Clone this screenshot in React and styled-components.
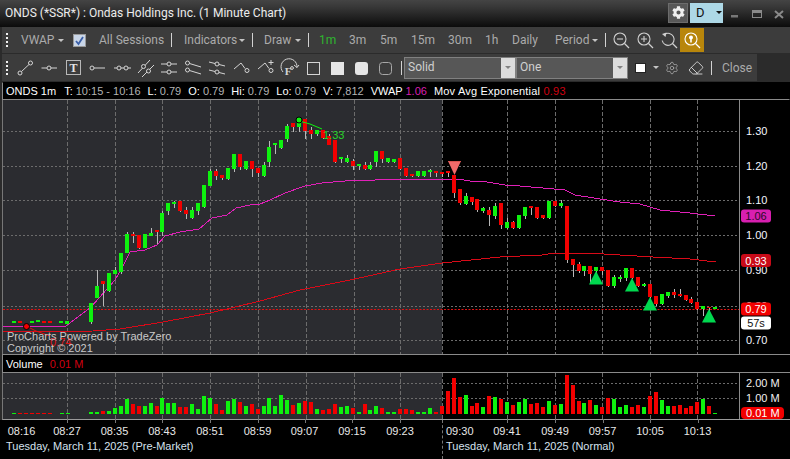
import React from 'react';
import styled, { createGlobalStyle } from 'styled-components';
import { FaCog } from 'react-icons/fa';
import { Settings, Eraser } from 'lucide-react';

const GlobalStyle = createGlobalStyle`
    html, body {
        margin: 0;
        background: #2b2b2b;
    }
    * {
        box-sizing: border-box;
    }
`;

const Window = styled.div`
    width: 790px;
    height: 459px;
    overflow: hidden;
    display: flex;
    flex-direction: column;
    background: #2b2b2b;
    font-family: "Liberation Sans", Arial, sans-serif;
`;

const TitleBar = styled.div`
    height: 27px;
    flex: none;
    display: flex;
    align-items: center;
    padding: 0 0 2px 5px;
    background: linear-gradient(#444444, #383838 25%, #0b0b0b);
`;

const Title = styled.div`
    flex: 1;
    color: #ececec;
    font: 12px Roboto, sans-serif;
`;

const GearButton = styled.div`
    width: 20px;
    height: 20px;
    display: flex;
    align-items: center;
    justify-content: center;
    background: #585858;
    border: 1px solid #6c6c6c;
    color: #f0f0f0;
`;

const AccountButton = styled.div`
    width: 33px;
    height: 20px;
    margin-left: 2px;
    display: flex;
    align-items: center;
    padding-left: 6px;
    background: #add8e6;
    color: #111111;
    font: 13px Roboto, sans-serif;
`;

const WindowControls = styled.svg`
    width: 67px;
    height: 20px;
    flex: none;
`;

const Caret = styled.span`
    flex: none;
    width: 0;
    height: 0;
    margin-left: ${props => props.$ml || 0}px;
    border-left: 3.5px solid transparent;
    border-right: 3.5px solid transparent;
    border-top: 3.5px solid ${props => props.$color || '#c4c4c4'};
`;

const Toolbars = styled.div`
    flex: none;
    padding-left: 2px;
`;

const ToolRow = styled.div`
    display: flex;
    align-items: center;
    width: ${props => props.$width};
    height: ${props => props.$height}px;
    margin-bottom: 1px;
    background: #3c3c3c;
`;

const Grip = styled.div`
    flex: none;
    width: 2px;
    height: 14px;
    margin: 0 0 0 4px;
    background: repeating-linear-gradient(#f0f0f0 0 2px, transparent 2px 4px);
`;

const ToolText = styled.span`
    flex: none;
    width: ${props => props.$w}px;
    margin-left: ${props => props.$ml || 0}px;
    color: ${props => props.$color || '#ababab'};
    font: 12px Roboto, sans-serif;
    white-space: nowrap;
`;

const Sep = styled.span`
    flex: none;
    width: 1px;
    height: 14px;
    margin-left: ${props => props.$ml || 0}px;
    background: #d2d2d2;
`;

const CheckBox = styled.span`
    flex: none;
    width: 13px;
    height: 13px;
    margin-left: ${props => props.$ml}px;
    display: flex;
    align-items: center;
    justify-content: center;
    background: #c9d6e8;
    border: 1px solid #9a9a9a;
`;

const ZoomIcons = styled.div`
    flex: none;
    display: flex;
    align-items: center;
    margin-left: 7px;
    gap: 7px;
`;

const GoldButton = styled.div`
    width: 24px;
    height: 24px;
    margin-left: -5px;
    display: flex;
    align-items: center;
    justify-content: center;
    background: #b8860b;
`;

const ToolIcons = styled.svg`
    flex: none;
    display: block;
    margin-left: 5px;
    width: 388px;
    height: 27px;
`;

const SelectBox = styled.div`
    flex: none;
    width: ${props => props.$w}px;
    height: 22px;
    margin-left: ${props => props.$ml || 0}px;
    display: flex;
    align-items: stretch;
    background: #575757;
    border: 1px solid #808080;
    color: #d0d0d0;
    font: 12px Roboto, sans-serif;
`;

const SelectLabel = styled.span`
    flex: 1;
    padding-left: 3px;
    line-height: 19px;
`;

const SelectArrow = styled.span`
    flex: none;
    width: 14px;
    display: flex;
    align-items: center;
    justify-content: center;
    background: #dcdcdc;
`;

const Swatch = styled.span`
    flex: none;
    width: 11px;
    height: 10px;
    margin-left: 7px;
    background: #ffffff;
    border: 1px solid #222222;
`;

const IconSlot = styled.span`
    flex: none;
    display: flex;
    margin-left: ${props => props.$ml}px;
    color: ${props => props.$color || '#b8b8b8'};
`;

const InfoLine = styled.div`
    flex: none;
    height: 18px;
    margin-left: 2px;
    display: flex;
    align-items: center;
    padding-left: 3px;
    gap: 7px;
    background: #000000;
    border: 1px solid #000000;
    border-left-color: #8a8a8a;
    border-bottom-color: #8a8a8a;
    color: #ffffff;
    font-size: 11px;
    white-space: nowrap;
`;

const InfoValue = styled.span`
    color: ${props => props.$color || '#b4b4b4'};
`;

const InfoWide = styled.span`
    letter-spacing: 0.2px;
`;

const ChartPane = styled.div`
    flex: none;
    height: 254px;
    margin-left: 2px;
    border-left: 1px solid #777777;
`;

const VolumeHead = styled.div`
    flex: none;
    height: 19px;
    margin-left: 2px;
    display: flex;
    align-items: center;
    gap: 7px;
    padding-left: 3px;
    background: #000000;
    border: 1px solid #8a8a8a;
    border-right: none;
    color: #ffffff;
    font-size: 11px;
`;

const VolumePane = styled.div`
    flex: none;
    height: 47px;
    margin-left: 2px;
    border-left: 1px solid #777777;
    border-bottom: 1px solid #9a9a9a;
`;

const TimeAxis = styled.div`
    flex: 1;
    display: flex;
    background: #000000;
    color: #e8e8e8;
    font-size: 11px;
`;

const Session = styled.div`
    flex: none;
    width: ${props => props.$w}px;
    border-left: ${props => (props.$divided ? '1px dashed #777777' : 'none')};
`;

const TimeRow = styled.div`
    display: flex;
    height: 19px;
    padding-top: 3px;
    align-items: center;
`;

const Tick = styled.span`
    position: relative;
    flex: none;
    width: ${props => props.$w}px;
    text-align: ${props => (props.$left ? 'left' : 'center')};
    padding-left: ${props => (props.$left ? 3 : 0)}px;

    &::before {
        content: ${props => (props.$mark ? '""' : 'none')};
        position: absolute;
        left: 50%;
        top: -6px;
        height: 4px;
        border-left: 1px solid #777777;
    }
`;

const DateLine = styled.div`
    padding-left: ${props => props.$pl}px;
    color: #d6e2ee;
    line-height: 14px;
`;

// x, body top, body bottom, wick top, wick bottom, colour (page coordinates)
const candles = [
    [14, 321, 323], [20, 321, 323, 0, 0, 'r'], [32, 321, 323], [38, 320, 322], [44, 321, 323, 0, 0, 'r'], [50, 321, 323, 0, 0, 'r'],
    [61, 321, 323], [67, 321, 324],
    [91, 303, 322, 303, 324], [97, 286, 298, 270, 298], [103, 281, 284, 281, 306, 'r'], [109, 273, 291, 273, 292], [115, 270, 274, 267, 274],
    [121, 253, 272, 253, 274], [127, 234, 253, 232, 253], [133, 234, 236, 232, 243, 'r'], [139, 235, 248, 235, 249, 'r'], [145, 234, 248],
    [151, 233, 236, 228, 236], [157, 230, 232, 230, 244, 'r'], [162, 213, 232, 211, 236], [168, 203, 211, 203, 215], [174, 202, 204, 201, 208],
    [180, 201, 211, 201, 212, 'r'], [186, 210, 214, 207, 219, 'r'], [192, 210, 218, 207, 219], [198, 203, 211, 203, 215], [204, 185, 207, 185, 208],
    [210, 171, 186, 169, 186], [216, 171, 176, 169, 180, 'r'], [222, 175, 178, 175, 180, 'r'], [228, 168, 179, 168, 180], [234, 154, 169, 154, 172],
    [240, 154, 167, 154, 170, 'r'], [246, 161, 169, 161, 170], [252, 161, 169, 161, 177, 'r'], [258, 168, 173, 168, 177, 'r'], [264, 165, 176, 162, 177],
    [269, 147, 162, 141, 167], [275, 143, 145, 143, 154], [281, 140, 148, 140, 149], [287, 126, 139, 124, 142], [293, 123, 127, 123, 132, 'r'],
    [299, 123, 127, 118, 132], [305, 119, 131, 119, 139, 'r'], [311, 130, 134, 127, 139, 'r'], [317, 130, 134, 130, 136], [323, 130, 138, 130, 139, 'r'],
    [329, 136, 145, 134, 145, 'r'], [335, 140, 162, 140, 163, 'r'], [341, 157, 159, 157, 163], [347, 158, 162, 155, 163], [353, 161, 166, 159, 170, 'r'],
    [359, 164, 166, 164, 170], [365, 165, 169, 162, 170, 'r'], [370, 165, 169, 162, 170], [376, 151, 162, 151, 167], [382, 151, 159, 151, 163, 'r'],
    [388, 158, 162, 158, 163], [394, 159, 162, 159, 163], [400, 158, 169, 158, 170, 'r'], [406, 168, 176, 168, 177, 'r'], [412, 174, 176, 174, 177, 'r'],
    [418, 171, 176, 171, 177], [424, 171, 176, 171, 177], [430, 170, 172, 169, 177], [436, 171, 173, 171, 177, 'r'], [442, 172, 174, 172, 177, 'r'],
    [448, 171, 173, 171, 177, 'r'], [454, 175, 193, 175, 198, 'r'], [460, 189, 203, 189, 205, 'r'], [466, 196, 204, 193, 205], [472, 197, 202, 197, 205, 'r'],
    [477, 199, 210, 199, 212, 'r'], [483, 208, 211, 207, 213], [489, 210, 215, 207, 226, 'r'], [495, 206, 216, 203, 219], [501, 203, 225, 203, 229, 'r'],
    [507, 222, 228, 218, 229], [513, 222, 228, 221, 229, 'r'], [519, 215, 228, 215, 229], [525, 207, 216, 207, 219], [531, 206, 208, 206, 215, 'r'],
    [537, 207, 218, 207, 219, 'r'], [543, 215, 218, 215, 219, 'r'], [549, 201, 218, 201, 219], [555, 201, 206, 201, 207, 'r'], [561, 203, 206, 200, 208],
    [567, 206, 260, 206, 263, 'r'], [573, 259, 265, 259, 277, 'r'], [579, 264, 271, 262, 273, 'r'], [584, 266, 271, 266, 276], [590, 266, 274, 266, 283, 'r'],
    [596, 267, 271, 267, 275], [602, 267, 271, 267, 275, 'r'], [608, 270, 286, 270, 287, 'r'], [614, 277, 286, 275, 288], [620, 277, 279, 275, 282],
    [626, 268, 278, 268, 281], [632, 268, 278, 268, 279, 'r'], [638, 277, 286, 277, 287, 'r'], [644, 284, 286, 283, 287], [650, 284, 297, 284, 298, 'r'],
    [656, 296, 304, 296, 306, 'r'], [662, 294, 304, 294, 305], [668, 292, 296, 292, 298], [674, 292, 295, 289, 298, 'r'], [680, 294, 296, 289, 297, 'r'],
    [686, 295, 300, 295, 301, 'r'], [691, 299, 303, 297, 304, 'r'], [697, 302, 309, 302, 310, 'r'], [703, 306, 309, 306, 316], [709, 307, 308, 307, 311, 'r'],
    [715, 307, 309],
];

// x, height, colour
const volumes = [
    [91, 2], [97, 2], [103, 3, 'r'], [109, 3], [115, 6], [121, 8], [127, 15], [133, 10, 'r'], [139, 8, 'r'], [145, 8], [151, 11], [157, 8, 'r'],
    [162, 16], [168, 11], [174, 11], [180, 7, 'r'], [186, 7, 'r'], [192, 10], [198, 5], [204, 18], [210, 16], [216, 10, 'r'], [222, 4, 'r'], [228, 13],
    [234, 15], [240, 12, 'r'], [246, 8], [252, 10, 'r'], [258, 5, 'r'], [264, 8], [269, 16], [275, 8], [281, 19], [287, 14], [293, 9, 'r'], [299, 11],
    [305, 13, 'r'], [311, 12, 'r'], [317, 5], [323, 4, 'r'], [329, 5, 'r'], [335, 10, 'r'], [341, 7], [347, 8], [353, 6, 'r'], [359, 2], [365, 10, 'r'],
    [370, 4], [376, 8], [382, 6, 'r'], [388, 2], [394, 2], [400, 5, 'r'], [406, 5, 'r'], [412, 4, 'r'], [418, 2], [424, 2], [430, 6], [436, 2, 'r'],
    [442, 8, 'r'], [448, 23, 'r'], [454, 36, 'r'], [460, 17, 'r'], [466, 19], [472, 8, 'r'], [477, 11, 'r'], [483, 7], [489, 18, 'r'], [495, 17], [501, 15, 'r'],
    [507, 12], [513, 9, 'r'], [519, 12], [525, 15], [531, 10, 'r'], [537, 11, 'r'], [543, 7, 'r'], [549, 13], [555, 9, 'r'], [561, 10], [567, 39, 'r'],
    [573, 29, 'r'], [579, 13, 'r'], [584, 11], [590, 14, 'r'], [596, 9], [602, 7, 'r'], [608, 16, 'r'], [614, 15], [620, 7], [626, 9], [632, 7, 'r'],
    [638, 9, 'r'], [644, 7], [650, 18, 'r'], [656, 22, 'r'], [662, 14], [668, 8], [674, 8, 'r'], [680, 9, 'r'], [686, 6, 'r'], [691, 8, 'r'], [697, 12, 'r'],
    [703, 15], [709, 8, 'r'], [715, 1],
];

const volumeDashes = [[14, 'g'], [20, 'r'], [26, 'r'], [32, 'r'], [38, 'r'], [44, 'r'], [50, 'r'], [62, 'g'], [68, 'g']];

const vwapLine = '3,326 66,326 91,307 115,280 121,270 130,252 145,250 157,245 165,236 180,232 199,229 212,218 227,215 236,208 250,205 260,204 270,200 285,193 305,186 322,183 345,181 375,180 403,179 457,179 470,181 487,182 505,185 520,186 565,190 575,195 600,199 620,202 640,204 660,210 690,213 715,216';
const emaLine = '3,332 93,331 120,329 163,322 210,313 260,301 300,290 350,280 400,269 442,263 500,257 520,256 542,255 555,253 587,253 620,255 653,257 690,259 716,262';

const gridY = [131, 166, 200, 235, 270, 306, 340];
const gridX = [67, 115, 162, 210, 258, 306, 354, 400, 442, 507, 555, 602, 650, 697];
const priceLabels = [['1.30', 131], ['1.20', 166], ['1.10', 200], ['1.00', 235], ['0.90', 270], ['0.80', 306], ['0.70', 340]];
const buyMarks = [[596, 271], [632, 278], [650, 297], [709, 309]];

const GREEN = '#0ef20e';
const RED = '#f20000';

const AxisBadge = ({ y, fill, color, children }) => (
    <g>
        <rect x="741" y={y - 6.5} width="30" height="13" rx="3" fill={fill} />
        <text x="756" y={y + 4} textAnchor="middle" fontSize="11" fill={color}>{children}</text>
    </g>
);

function PriceChart() {
    return (
        <svg width="787" height="254" viewBox="3 100 787 254" style={{ display: 'block' }} fontFamily="'Liberation Sans', Arial, sans-serif">
            <rect x="3" y="100" width="787" height="254" fill="#000000" />
            <rect x="3" y="100" width="439" height="254" fill="#2b2c30" />
            <g stroke="#6c6c6c" strokeWidth="1" strokeDasharray="2 2" shapeRendering="crispEdges">
                {gridY.map(y => <line key={y} x1="3" x2="739" y1={y} y2={y} />)}
            </g>
            <g stroke="#6c6c6c" strokeWidth="1" strokeDasharray="4 2" shapeRendering="crispEdges">
                {gridX.map(x => <line key={x} x1={x} x2={x} y1="100" y2="354" />)}
            </g>
            <line x1="3" x2="739" y1="309.5" y2="309.5" stroke="#e01010" strokeDasharray="2 1.5" />
            <line x1="739.5" x2="739.5" y1="100" y2="354" stroke="#8a8a8a" />

            <polyline points={vwapLine} fill="none" stroke="#e020b8" strokeWidth="1" shapeRendering="crispEdges" />
            <polyline points={emaLine} fill="none" stroke="#d80a18" strokeWidth="1" shapeRendering="crispEdges" />

            <g shapeRendering="crispEdges">
                {candles.map(([x, top, bottom, wickTop, wickBottom, c]) => (
                    <g key={x}>
                        {wickTop ? <line x1={x + 0.5} x2={x + 0.5} y1={wickTop} y2={wickBottom} stroke="#b8b8b8" /> : null}
                        <rect x={x - 2} y={top} width="4" height={bottom - top} fill={c === 'r' ? RED : GREEN} />
                    </g>
                ))}
            </g>

            <polyline points="299,121 310,124 322,129" fill="none" stroke={GREEN} />
            <circle cx="299" cy="120" r="3" fill={GREEN} stroke="#000000" />
            <text x="323" y="139" fontSize="11" fill="#28d428">1.33</text>

            <polyline points="26,326 36,331 50,336" fill="none" stroke="#e01010" />
            <circle cx="26.5" cy="326.5" r="3" fill="#f00000" stroke="#000000" />
            <text x="50" y="346" fontSize="11" fill="#e01010">0.74</text>

            <polygon points="448,161 461,161 454.5,175" fill="#f26a6a" />
            <line x1="448" x2="461" y1="161.5" y2="161.5" stroke="#d9534f" />
            {buyMarks.map(([x, y]) => (
                <polygon key={x} points={`${x},${y} ${x + 7},${y + 13.5} ${x - 7},${y + 13.5}`} fill="#00d84f" />
            ))}

            <text x="7" y="340" fontSize="11" fill="#c9c9c9">ProCharts Powered by TradeZero</text>
            <text x="7" y="352" fontSize="11" fill="#c9c9c9">Copyright © 2021</text>

            {priceLabels.map(([label, y]) => (
                <text key={label} x="746" y={y + 4} fontSize="11" fill="#f2f6ff">{label}</text>
            ))}
            <AxisBadge y={216} fill="#d81fb0" color="#2a0a2a">1.06</AxisBadge>
            <AxisBadge y={260.5} fill="#c80a18" color="#ffffff">0.93</AxisBadge>
            <AxisBadge y={309} fill="#f20000" color="#ffffff">0.79</AxisBadge>
            <AxisBadge y={323} fill="#ffffff" color="#111111">57s</AxisBadge>
        </svg>
    );
}

function VolumeChart() {
    return (
        <svg width="787" height="46" viewBox="3 373 787 46" style={{ display: 'block' }} fontFamily="'Liberation Sans', Arial, sans-serif">
            <rect x="3" y="373" width="787" height="46" fill="#000000" />
            <rect x="3" y="373" width="439" height="46" fill="#2b2c30" />
            <g stroke="#6c6c6c" strokeDasharray="2 2" shapeRendering="crispEdges">
                <line x1="3" x2="739" y1="383" y2="383" />
                <line x1="3" x2="739" y1="398" y2="398" />
            </g>
            <g stroke="#6c6c6c" strokeDasharray="4 2" shapeRendering="crispEdges">
                {gridX.map(x => <line key={x} x1={x} x2={x} y1="373" y2="419" />)}
            </g>
            <line x1="739.5" x2="739.5" y1="373" y2="419" stroke="#8a8a8a" />
            <g shapeRendering="crispEdges">
                {volumeDashes.map(([x, c]) => <rect key={x} x={x - 2} y="413" width="4" height="1" fill={c === 'r' ? RED : GREEN} />)}
                {volumes.map(([x, h, c]) => <rect key={x} x={x - 2} y={414 - h} width="4" height={h} fill={c === 'r' ? RED : GREEN} />)}
            </g>
            <text x="746" y="387" fontSize="11" fill="#f0f0f0">2.00 M</text>
            <text x="746" y="402" fontSize="11" fill="#f0f0f0">1.00 M</text>
            <rect x="741" y="407" width="43" height="12" rx="4" fill="#f20000" />
            <text x="746" y="417" fontSize="11" fill="#ffffff">0.01 M</text>
        </svg>
    );
}

const Lens = ({ children, color = '#d0d0d0', size = 17 }) => (
    <svg width={size} height={size} viewBox="0 0 17 17" fill="none" stroke={color} strokeWidth="1.1">
        {children}
        <line x1="11.5" y1="11.5" x2="16" y2="16" strokeWidth="1.3" />
    </svg>
);

function DrawingTools() {
    return (
        <ToolIcons viewBox="12 54 388 27" fill="none" stroke="#d4d4d4" strokeWidth="1">
            <circle cx="19" cy="73" r="2" />
            <circle cx="29.5" cy="63" r="2" />
            <line x1="20.5" y1="71.5" x2="28" y2="64.5" />

            <path d="M40.5 68H46M50 68H56" />
            <circle cx="48" cy="68" r="2" />

            <rect x="65.5" y="60.5" width="14" height="14" stroke="#b8b8b8" />
            <text x="72.5" y="72" textAnchor="middle" fontSize="12" fontWeight="700" fontFamily="'Liberation Serif', serif" fill="#e2e2e2" stroke="none">T</text>

            <circle cx="91" cy="68" r="2" />
            <path d="M93 68H104" />

            <path d="M113 68H116M120 68H123M127 68H130" />
            <circle cx="118" cy="68" r="2" />
            <circle cx="125" cy="68" r="2" />

            <path d="M137 73L149 60M141 77L153 65" />
            <circle cx="142.5" cy="66.5" r="2" fill="#3c3c3c" />
            <circle cx="147.5" cy="71" r="2" fill="#3c3c3c" />

            <path d="M160 64H166M170 64H176M160 72H166M170 72H176" />
            <circle cx="168" cy="64" r="2" />
            <circle cx="168" cy="72" r="2" />

            <circle cx="186.5" cy="63" r="2" />
            <circle cx="186.5" cy="70" r="2" />
            <path d="M188.5 63.5L200 67M188.5 70.5L200 74" />

            <path d="M208 62L214 63.5M218 64.5L224 66M208 70L214 71.5M218 72.5L224 74" />
            <circle cx="216" cy="64" r="2" />
            <circle cx="216" cy="72" r="2" />

            <path d="M233 69L240 63L244 68.5" />
            <circle cx="246" cy="70.5" r="2" />

            <path d="M257 69L264 63L268 68.5" />
            <circle cx="270" cy="70.5" r="2" />
            <path d="M270 60V65M267.5 62.5H272.5" />

            <path d="M282 72A8 8 0 1 1 296 67.5L293 65M296 67.5L298 65" />
            <circle cx="291" cy="68" r="1.4" />
            <text x="287" y="75" textAnchor="middle" fontSize="11" fontWeight="700" fontFamily="'Liberation Serif', serif" fill="#d4d4d4" stroke="none">F</text>

            <rect x="306.5" y="62.5" width="12" height="12" />
            <rect x="330" y="62" width="13" height="13" fill="#e6e6e6" stroke="none" />
            <rect x="354" y="62" width="13" height="13" rx="3" fill="#e6e6e6" stroke="none" />
            <rect x="378.5" y="62.5" width="12" height="12" rx="3" stroke="#a8a8a8" />
        </ToolIcons>
    );
}

const TICKS_PRE = [['08:16', 43], ['08:27', 48, true], ['08:35', 47, true], ['08:43', 48, true], ['08:51', 48, true], ['08:59', 47, true], ['09:07', 47, true], ['09:15', 48, true], ['09:23', 48, true]];
const TICKS_REG = [['09:41', 48], ['09:49', 48], ['09:57', 47], ['10:05', 48], ['10:13', 47]];

function App() {
    return (
        <Window>
            <GlobalStyle />
            <TitleBar>
                <Title>ONDS (*SSR*) : Ondas Holdings Inc. (1 Minute Chart)</Title>
                <GearButton><FaCog size={13} /></GearButton>
                <AccountButton>D<Caret $ml={11} $color="#111111" /></AccountButton>
                <WindowControls viewBox="0 0 67 20">
                    <rect x="8" y="12" width="7" height="2.5" fill="#777777" />
                    <rect x="29.5" y="7.5" width="9" height="7" fill="none" stroke="#8a8a8a" />
                    <rect x="29" y="7" width="10" height="3" fill="#8a8a8a" />
                    <path d="M52 8L60 15M60 8L52 15" stroke="#8a8a8a" strokeWidth="2" />
                </WindowControls>
            </TitleBar>
            <Toolbars>
                <ToolRow $width="788px" $height={26}>
                    <Grip />
                    <ToolText $ml={13} $w={34}>VWAP</ToolText>
                    <Caret $ml={3} />
                    <CheckBox $ml={9}>
                        <svg width="11" height="11" viewBox="0 0 11 11" fill="none" stroke="#3a5fa8" strokeWidth="1.8"><path d="M2 6L4.5 9L9 2" /></svg>
                    </CheckBox>
                    <ToolText $ml={13} $w={72}>All Sessions</ToolText>
                    <Sep />
                    <ToolText $ml={12} $w={54}>Indicators</ToolText>
                    <Caret $ml={1} />
                    <Sep $ml={7} />
                    <ToolText $ml={11} $w={30}>Draw</ToolText>
                    <Caret $ml={1} />
                    <Sep $ml={7} />
                    <ToolText $ml={10} $w={30} $color="#2fb52f">1m</ToolText>
                    <ToolText $w={31}>3m</ToolText>
                    <ToolText $w={31}>5m</ToolText>
                    <ToolText $w={37}>15m</ToolText>
                    <ToolText $w={37}>30m</ToolText>
                    <ToolText $w={27}>1h</ToolText>
                    <ToolText $w={43}>Daily</ToolText>
                    <ToolText $w={36}>Period</ToolText>
                    <Caret $ml={1} />
                    <Sep $ml={7} />
                    <ZoomIcons>
                        <Lens><circle cx="7" cy="7" r="6" /><line x1="4" y1="7" x2="10" y2="7" /></Lens>
                        <Lens><circle cx="7" cy="7" r="6" /><path d="M4 7H10M7 4V10" /></Lens>
                        <Lens>
                            <path d="M3.5 2.5A6 6 0 1 1 1.2 8.5" />
                            <path d="M5.5 0.5L1 2L4.5 5Z" fill="#d0d0d0" stroke="none" />
                        </Lens>
                        <GoldButton>
                            <Lens color="#ffffff" size={17}>
                                <circle cx="7" cy="7" r="6" />
                                <circle cx="7" cy="5.5" r="2" fill="#ffffff" stroke="none" />
                                <rect x="6.2" y="6" width="1.6" height="4.5" fill="#ffffff" stroke="none" />
                            </Lens>
                        </GoldButton>
                    </ZoomIcons>
                </ToolRow>
                <ToolRow $width="755px" $height={27}>
                    <Grip />
                    <DrawingTools />
                    <Sep />
                    <SelectBox $ml={2} $w={112}>
                        <SelectLabel>Solid</SelectLabel>
                        <SelectArrow><Caret $color="#808080" /></SelectArrow>
                    </SelectBox>
                    <SelectBox $w={112}>
                        <SelectLabel>One</SelectLabel>
                        <SelectArrow><Caret $color="#808080" /></SelectArrow>
                    </SelectBox>
                    <Swatch />
                    <Caret $ml={7} />
                    <IconSlot $ml={6}><Settings size={14} strokeWidth={1.2} /></IconSlot>
                    <IconSlot $ml={9} $color="#e0e0e0"><Eraser size={16} strokeWidth={1.3} /></IconSlot>
                    <Sep $ml={7} />
                    <ToolText $ml={10} $w={32}>Close</ToolText>
                </ToolRow>
            </Toolbars>
            <InfoLine>
                <span style={{ marginRight: 1 }}>ONDS 1m</span>
                <span>T: <InfoValue>10:15 - 10:16</InfoValue></span>
                <span>L: <InfoValue>0.79</InfoValue></span>
                <span>O: <InfoValue>0.79</InfoValue></span>
                <span>Hi: <InfoValue>0.79</InfoValue></span>
                <span>Lo: <InfoValue>0.79</InfoValue></span>
                <span>V: <InfoValue>7,812</InfoValue></span>
                <span>VWAP <InfoValue $color="#d81fb0">1.06</InfoValue></span>
                <InfoWide>Mov Avg Exponential <InfoValue $color="#d00010">0.93</InfoValue></InfoWide>
            </InfoLine>
            <ChartPane><PriceChart /></ChartPane>
            <VolumeHead>Volume <InfoValue $color="#d00010">0.01 M</InfoValue></VolumeHead>
            <VolumePane><VolumeChart /></VolumePane>
            <TimeAxis>
                <Session $w={442}>
                    <TimeRow>
                        {TICKS_PRE.map(([label, w, mark]) => <Tick key={label} $w={w} $mark={mark}>{label}</Tick>)}
                    </TimeRow>
                    <DateLine $pl={6}>Tuesday, March 11, 2025 (Pre-Market)</DateLine>
                </Session>
                <Session $w={348} $divided>
                    <TimeRow>
                        <Tick $w={40} $left>09:30</Tick>
                        {TICKS_REG.map(([label, w]) => <Tick key={label} $w={w} $mark>{label}</Tick>)}
                    </TimeRow>
                    <DateLine $pl={3}>Tuesday, March 11, 2025 (Normal)</DateLine>
                </Session>
            </TimeAxis>
        </Window>
    );
}

export default App;
